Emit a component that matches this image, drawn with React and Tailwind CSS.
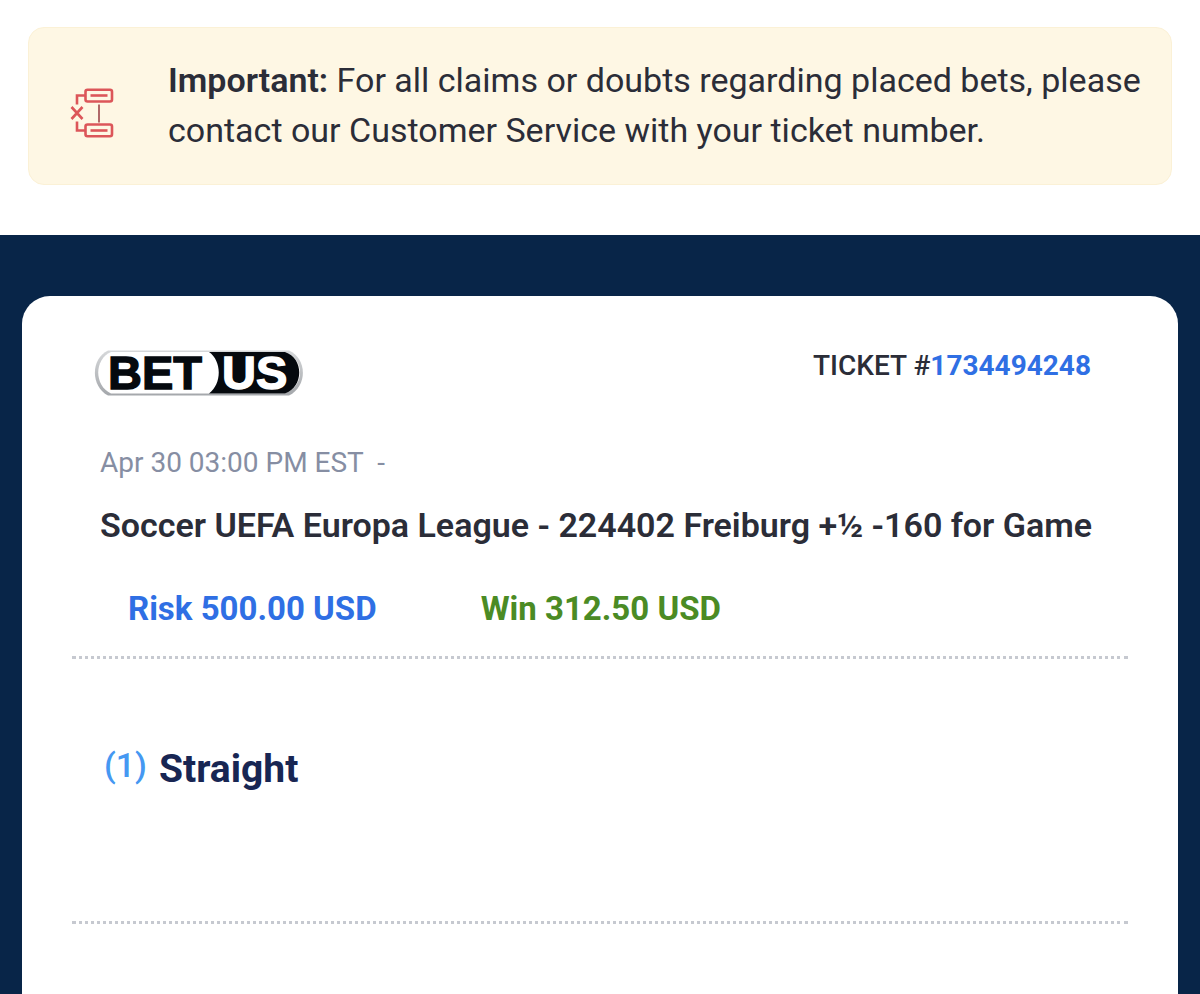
const ticket = {
    number: '1734494248',
    date: 'Apr 30 03:00 PM EST',
    description: 'Soccer UEFA Europa League - 224402 Freiburg +½ -160 for Game',
    risk: '500.00',
    win: '312.50',
    type: 'Straight',
    count: 1
};

function ClaimIcon() {
    return (
        <svg width="44" height="50" viewBox="0 0 44 50" fill="none" stroke="#dc5659" strokeWidth="2.6" className="mt-4 shrink-0" aria-hidden="true">
            <rect x="15.5" y="1.7" width="26.5" height="11.8" rx="2" />
            <path d="M20.5 7.5h17" />
            <rect x="15.5" y="36.5" width="26.5" height="11.8" rx="2" />
            <path d="M20.5 42.5h17" />
            <path d="M15.5 7.5H7v9M7 33.5v9h8.5" />
            <path d="M1.5 19l11 12M12.5 19l-11 12" />
            <path d="M29 16.5v18" stroke="#a8585a" strokeWidth="1.8" />
        </svg>
    );
}

function Logo() {
    return (
        <svg width="210" height="58" viewBox="0 -6 210 58" role="img" aria-label="BetUS">
            <defs>
                <linearGradient id="rim" x1="0" y1="0" x2="0" y2="1">
                    <stop offset="0" stopColor="#d6d8da" />
                    <stop offset="1" stopColor="#a4a7ab" />
                </linearGradient>
            </defs>
            <path d="M14 0.5H195C213.5 9 213.5 36 195 45.5H14C-3.5 36 -3.5 9 14 0.5Z" fill="url(#rim)" />
            <path d="M17 2H191C211 9 211 36 191 43.5H17C0 36 0 9 17 2Z" fill="#fff" />
            <path d="M115 2H191C210 8 210 37 191 43.5H115C128 34 128 11 115 2Z" fill="#05090e" />
            <g fontFamily="'Liberation Sans', Arial, sans-serif" fontWeight="700" fontSize="47" strokeWidth="1.4">
                <text x="14" y="39" fill="#05090e" stroke="#05090e">BET</text>
                <text x="128" y="39" fill="#fff" stroke="#fff">US</text>
            </g>
        </svg>
    );
}

function Notice() {
    return (
        <div className="mx-7 mt-[27px] mb-[50px] flex items-center gap-[54px] rounded-2xl border border-[#fbf1d6] bg-[#fef7e4] pt-[27px] pr-7 pb-[29px] pl-[41px] text-[#2b2d38]">
            <ClaimIcon />
            <p className="text-[34px] leading-[50px] font-[370]">
                <strong className="font-semibold">Important:</strong> For all claims or doubts regarding placed bets, please contact our Customer Service with your ticket number.
            </p>
        </div>
    );
}

function TicketCard() {
    return (
        <article className="min-h-[698px] rounded-t-[28px] bg-white px-[50px] pt-12">
            <header className="flex items-start justify-between pr-[37px] pl-[22px]">
                <Logo />
                <p className="pt-1.5 text-[28px] leading-8 font-medium text-[#2b2d38]">
                    TICKET #<span className="font-bold text-[#2f6fe4]">{ticket.number}</span>
                </p>
            </header>

            <div className="mt-[45px] px-7">
                <p className="text-[28px] leading-8 text-[#868ea3]">{ticket.date} &nbsp;-</p>
                <h1 className="mt-[25px] text-[34px] leading-[42px] font-semibold whitespace-nowrap text-[#2b2d38]">{ticket.description}</h1>
            </div>

            <div className="mt-[42px] flex gap-[104px] px-14 text-[33px] leading-[42px] font-bold">
                <p className="text-[#2f6fe4]">Risk {ticket.risk} USD</p>
                <p className="text-[#4b8b24]">Win {ticket.win} USD</p>
            </div>

            <section className="mt-[26px] flex h-[268px] items-start gap-3 border-y-[3px] border-dotted border-[#c6c9d0] px-8 pt-[87px]">
                <span className="text-[34px] leading-[38px] font-medium text-[#4598f2]">({ticket.count})</span>
                <h2 className="text-[39px] leading-[46px] font-bold text-[#182653]">{ticket.type}</h2>
            </section>
        </article>
    );
}

export default function App() {
    return (
        <div className="flex min-h-screen flex-col bg-white font-[Roboto,sans-serif]">
            <Notice />
            <main className="grow bg-[#082548] px-[22px] pt-[61px]">
                <TicketCard />
            </main>
        </div>
    );
}
